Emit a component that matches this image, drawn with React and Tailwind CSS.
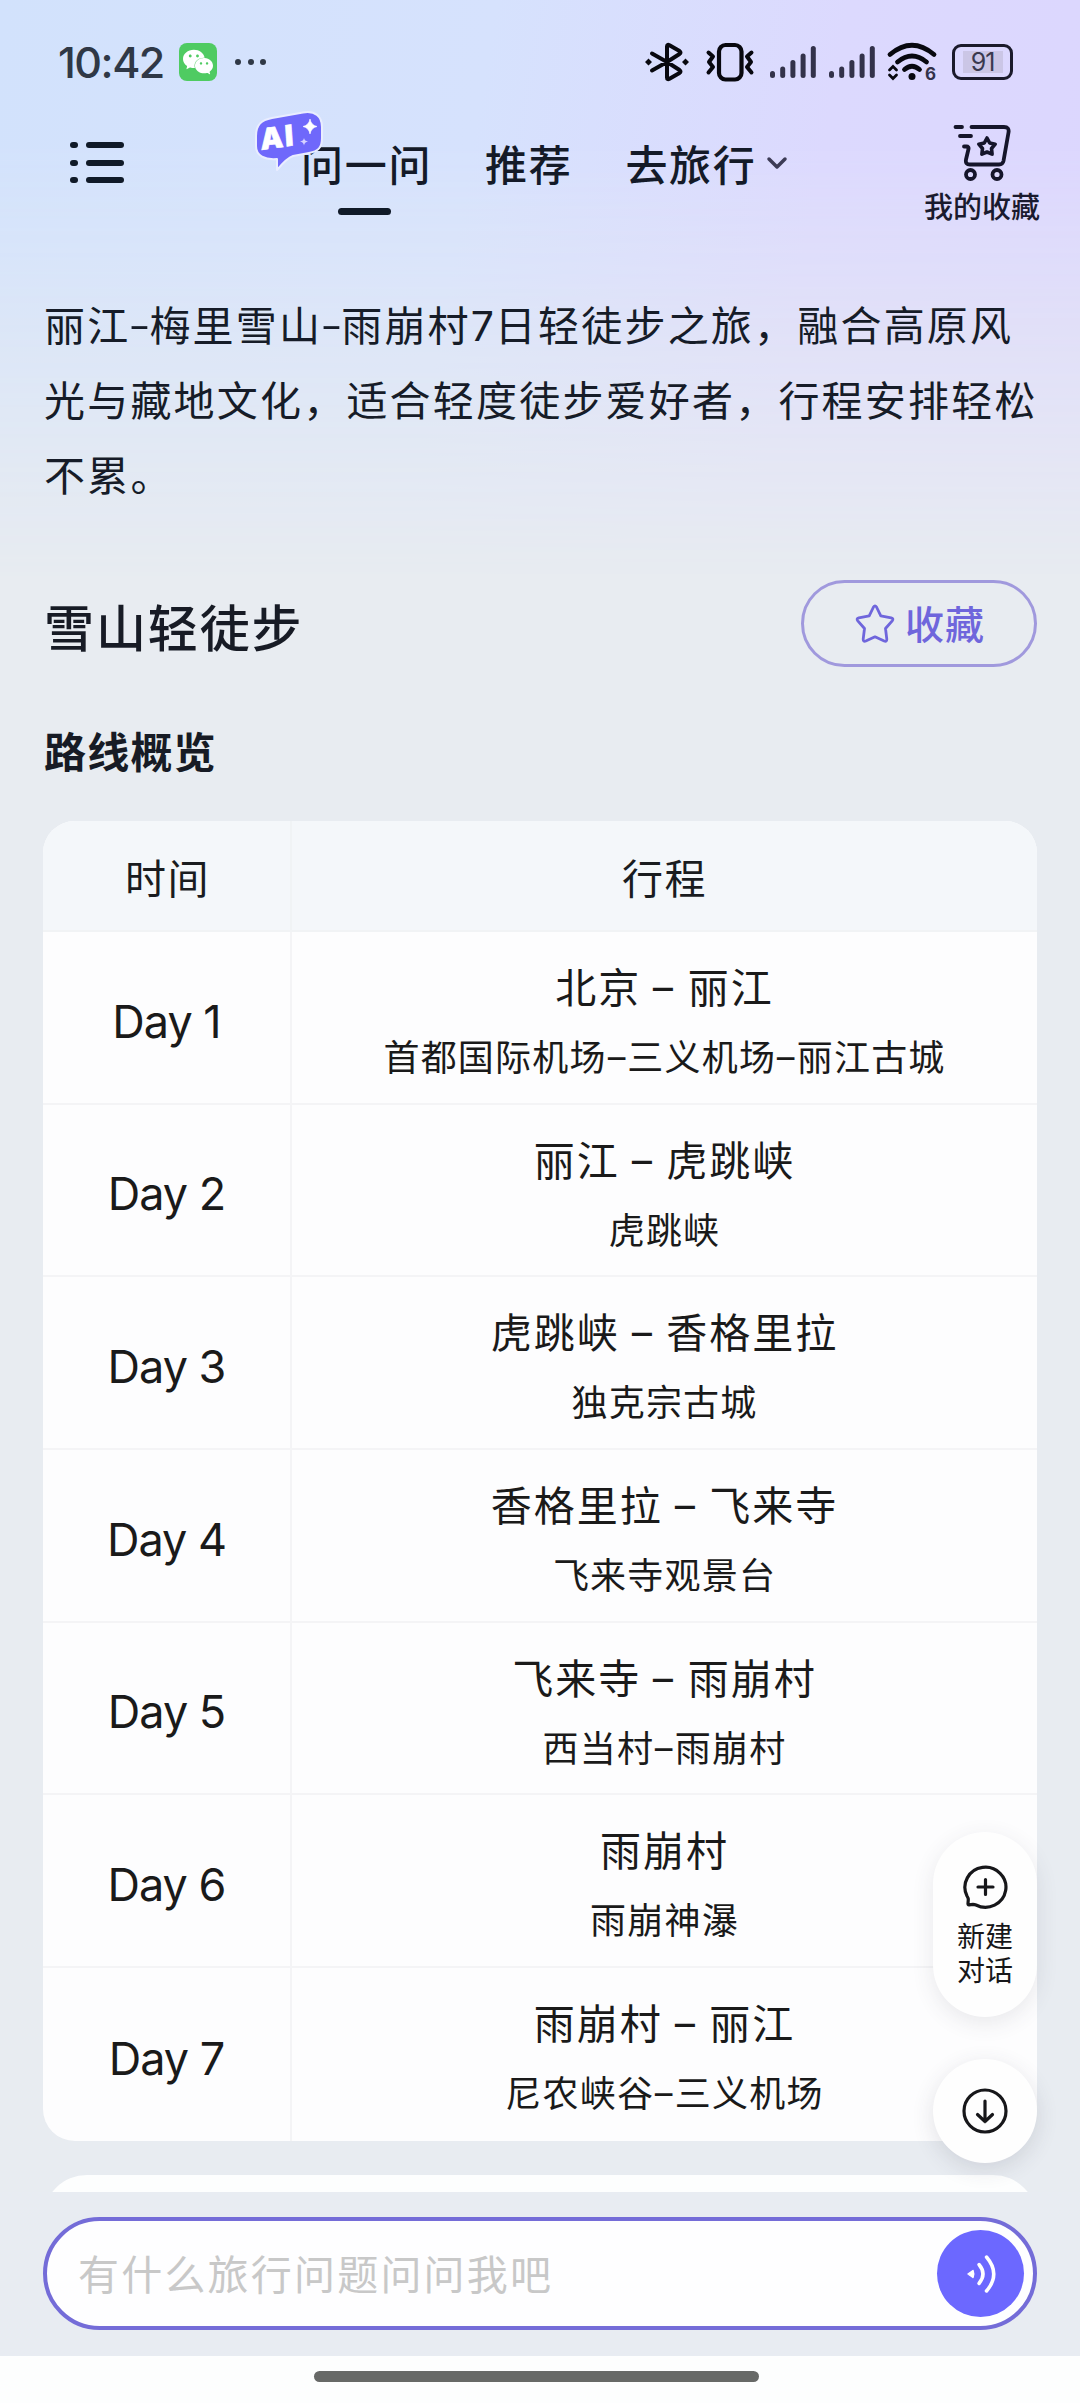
import { SiWechat } from 'react-icons/si';

const DAYS = [
  { day: 'Day 1', title: '北京 – 丽江', detail: '首都国际机场–三义机场–丽江古城' },
  { day: 'Day 2', title: '丽江 – 虎跳峡', detail: '虎跳峡' },
  { day: 'Day 3', title: '虎跳峡 – 香格里拉', detail: '独克宗古城' },
  { day: 'Day 4', title: '香格里拉 – 飞来寺', detail: '飞来寺观景台' },
  { day: 'Day 5', title: '飞来寺 – 雨崩村', detail: '西当村–雨崩村' },
  { day: 'Day 6', title: '雨崩村', detail: '雨崩神瀑' },
  { day: 'Day 7', title: '雨崩村 – 丽江', detail: '尼农峡谷–三义机场' },
];

const BluetoothIcon = () => (
  <svg className="w-[44px] h-[40px]" viewBox="0 0 44 40" fill="none" stroke="#08080f" strokeWidth="4" strokeLinecap="round" strokeLinejoin="round">
    <path d="M7 11.500 L22 20 L34.500 28 Q36.500 29.500 34.500 31 L24.500 36.800 Q22 38 22 35.500 V4.500 Q22 2 24.500 3.200 L34.500 9 Q36.500 10.500 34.500 12 L22 20 L7 28.500" />
    <path d="M3.500 16.500 l3.500 3.500 -3.500 3.500 -3.500 -3.500z M40.500 16.500 l3.500 3.500 -3.500 3.500 -3.500 -3.500z" fill="#08080f" stroke="none" />
  </svg>
);

const VibrateIcon = () => (
  <svg className="w-[50px] h-[40px]" viewBox="0 0 50 40" fill="none" stroke="#08080f" strokeWidth="4.200" strokeLinecap="round" strokeLinejoin="round">
    <rect x="14" y="3" width="22.500" height="34.500" rx="6.500" />
    <path d="M3.500 10.500 L8 14.500 L4 20 L8 25 L3.500 30.500 M46.500 10.500 L42 14.500 L46 20 L42 25 L46.500 30.500" strokeWidth="4" />
  </svg>
);

const SignalIcon = () => (
  <svg className="w-[46px] h-[34px]" viewBox="0 0 46 34" fill="#33324a">
    <rect x="0" y="26" width="5" height="7" rx="2.500" />
    <rect x="10.200" y="21.500" width="5" height="11.500" rx="2.500" />
    <rect x="20.400" y="15" width="5" height="18" rx="2.500" />
    <rect x="30.600" y="8.500" width="5" height="24.500" rx="2.500" />
    <rect x="40.800" y="1" width="5" height="32" rx="2.500" />
  </svg>
);

const WifiIcon = () => (
  <svg className="w-[50px] h-[40px] overflow-visible" viewBox="0 0 50 40" fill="none" stroke="#08080f" strokeWidth="4.800" strokeLinecap="round">
    <path d="M3 12.500 Q25 -6 47 12.500" />
    <path d="M10.500 20 Q25 8 39.500 20" />
    <path d="M17.500 27.500 Q25 21 32.500 27.500" />
    <circle cx="25" cy="34.500" r="3.500" fill="#08080f" stroke="none" />
    <path d="M2.500 28 L6 24.500 L9.500 28 M2.500 33 L6 36.500 L9.500 33" strokeWidth="2.800" />
    <text x="38" y="37.500" fontSize="17" fontWeight="700" fontFamily="Inter, sans-serif" fill="#33324a" stroke="none">6</text>
  </svg>
);

const AiBadge = () => (
  <svg className="absolute -left-[48px] -top-[22px] w-[72px] h-[66px]" viewBox="0 0 72 66">
    <path
      d="M19 9 L50 3.500 C62 1.500 69 7 69 18 V29 C69 39 65 42.500 56 44 L40 47 C34 49 29 55 24 61 L24 50 C12 51 3 47 3 37 V27 C3 16 8 11 19 9 Z"
      fill="#6f68fb"
      stroke="#e9edff"
      strokeWidth="2"
      strokeLinejoin="round"
    />
    <text x="8" y="41" fontSize="29" fontWeight="900" fontFamily="Inter, sans-serif" fill="#fff" stroke="#fff" strokeWidth=".6" transform="rotate(-8 8 41) skewX(-4) translate(3 0)">AI</text>
    <path d="M57 10 Q58.200 16.300 64 17.500 Q58.200 18.700 57 25 Q55.800 18.700 50 17.500 Q55.800 16.300 57 10Z" fill="#fff" stroke="#fff" strokeWidth=".6" />
    <path d="M51 29 Q51.500 32 55 32.500 Q51.500 33 51 36.500 Q50.500 33 47 32.500 Q50.500 32 51 29Z" fill="#d6d2ff" />
  </svg>
);

const CartIcon = () => (
  <svg className="w-[58px] h-[58px]" viewBox="0 0 58 58" fill="none" stroke="#15152a" strokeWidth="3.800" strokeLinecap="round" strokeLinejoin="round">
    <path d="M2.500 3 H9 M18.500 3 H51 Q56.500 3 55.500 8.500 L50.500 37 Q49.800 40.500 46 40.500 H17 Q12 40.500 13 35.500 L15.500 25 Q16 22.500 13.500 22.500 H11 M7 12 H18" />
    <path d="M34 14 l2.700 5 5.500 1.200 -3.700 4.300 .6 5.700 -5.100 -2.200 -5.100 2.200 .6 -5.700 -3.700 -4.300 5.500 -1.200z" strokeWidth="3.600" />
    <circle cx="17.500" cy="50.500" r="4.500" />
    <circle cx="44" cy="50.500" r="4.500" />
  </svg>
);

const StatusBar = () => (
  <div className="h-[124px] pl-[58px] pr-[67px] flex items-center">
    <span className="w-[101px] text-[43px] leading-none tracking-[-1.500px] text-[#2f3846] font-[Inter] font-medium whitespace-nowrap">10:42</span>
    <span className="ml-5 w-[38px] h-[38px] rounded-[8px] bg-[#4fcb62] flex items-center justify-center text-white">
      <SiWechat size={30} />
    </span>
    <span className="ml-[18px] flex gap-[6.500px]">
      <i className="w-[6px] h-[6px] rounded-full bg-[#2f3846]" />
      <i className="w-[6px] h-[6px] rounded-full bg-[#2f3846]" />
      <i className="w-[6px] h-[6px] rounded-full bg-[#2f3846]" />
    </span>
    <div className="ml-auto flex items-center">
      <BluetoothIcon />
      <span className="w-4" />
      <VibrateIcon />
      <span className="w-[15px]" />
      <SignalIcon />
      <span className="w-[13px]" />
      <SignalIcon />
      <span className="w-[12px]" />
      <WifiIcon />
      <span className="ml-[15px] w-[61px] h-[36px] rounded-[9px] border-[3px] border-[#1b1a2b] flex items-center justify-center">
        <span className="w-[40px] h-[22px] bg-[#cbc6e6] flex items-center justify-center text-[25px] leading-none tracking-[-1px] font-[Inter] text-[#3a394f]">91</span>
      </span>
    </div>
  </div>
);

const NavBar = () => (
  <div className="h-[176px] flex items-start">
    <div className="ml-[70px] mt-[18px] w-[54px] flex flex-col gap-[11.500px]">
      {[0, 1, 2].map(i => (
        <div key={i} className="flex justify-between">
          <i className="w-[8px] h-[6px] rounded-full bg-[#101a28]" />
          <i className="w-[38px] h-[6px] rounded-full bg-[#101a28]" />
        </div>
      ))}
    </div>
    <div className="ml-[177px] mt-[7px] flex text-[42px] leading-[64px] tracking-[1.700px] font-medium text-[#141a28] whitespace-nowrap">
      <div className="relative w-[131px]">
        问一问
        <AiBadge />
        <div className="mx-auto mt-[13px] w-[53px] h-[7px] rounded-full bg-[#101a28] -translate-x-[2px]" />
      </div>
      <div className="ml-[53px]">推荐</div>
      <div className="ml-[53px] flex items-center h-[64px]">
        去旅行
        <svg className="ml-[9px] w-[22px] h-[14px]" viewBox="0 0 22 14" fill="none" stroke="#3c3b55" strokeWidth="3.500" strokeLinecap="round" strokeLinejoin="round">
          <path d="M3 3 L11 11 L19 3" />
        </svg>
      </div>
    </div>
    <div className="ml-auto mr-[39px] w-[118px] flex flex-col items-center">
      <CartIcon />
      <span className="mt-[2px] text-[29px] leading-[42px] font-medium text-[#1a1a2e]">我的收藏</span>
    </div>
  </div>
);

const Dash = () => <span className="inline-block w-[19px] h-[75px] align-top text-center tracking-normal scale-x-150 -translate-y-[2px]">-</span>;

// En dashes sit a little low and thin next to Han glyphs
const RouteText = ({ text }) => text.split('–').map((part, i) => (
  <span key={i}>
    {i > 0 && <span className="inline-block font-medium scale-x-110 -translate-y-[2px]">–</span>}
    {part}
  </span>
));

const RouteTable = () => (
  <div className="mx-[43px] rounded-[32px] overflow-hidden bg-[#fdfdfe]">
    <div className="h-[111px] flex items-stretch bg-[#f4f7fa] border-b-2 border-[#f1f3f5] text-[41px] tracking-[1.500px] text-[#1a1c1f]">
      <div className="w-[249px] flex items-center justify-center border-r-2 border-[#f0f3f5] pl-[2px] pt-[2px]">时间</div>
      <div className="flex-1 flex items-center justify-center pt-[2px]">行程</div>
    </div>
    {DAYS.map(d => (
      <div key={d.day} className="h-[172.700px] flex items-stretch text-[#1a1a1a] border-b-2 border-[#f4f4f6] last:border-b-0">
        <div className="w-[249px] flex items-center justify-center border-r-2 border-[#f4f4f6] text-[45px] tracking-[-1px] font-[Inter] pt-2">{d.day}</div>
        <div className="flex-1 flex flex-col items-center pt-[20px] whitespace-pre">
          <div className="text-[41px] leading-[66px] tracking-[2px]"><RouteText text={d.title} /></div>
          <div className="mt-[5px] text-[36px] leading-[64px] tracking-[1.200px]"><RouteText text={d.detail} /></div>
        </div>
      </div>
    ))}
  </div>
);

const FloatingActions = () => (
  <div className="absolute right-[43px] top-[1832px] flex flex-col gap-[42px] text-[#17171a]">
    <div className="w-[104px] h-[185px] rounded-[52px] bg-[#fefefe] shadow-[0_6px_22px_rgba(60,60,80,0.11)] flex flex-col items-center pt-[32px]">
      <svg className="w-[46px] h-[46px]" viewBox="0 0 46 46" fill="none" stroke="currentColor" strokeWidth="3.200" strokeLinecap="round" strokeLinejoin="round">
        <path d="M5 32 A20.500 20 0 1 1 14 41 Q12.500 40.300 11 40.300 L7 40.800 Q5.800 40.800 6 39.500 L6.300 35.500 Q6.300 34 5 32Z" />
        <path d="M23.500 15.500 V30.500 M16 23 H31" />
      </svg>
      <div className="mt-[8px] text-[28px] leading-[34px] text-center">新建<br />对话</div>
    </div>
    <div className="w-[104px] h-[104px] rounded-full bg-[#fefefe] shadow-[0_6px_22px_rgba(60,60,80,0.14)] flex items-center justify-center">
      <svg className="w-[46px] h-[46px]" viewBox="0 0 46 46" fill="none" stroke="currentColor" strokeWidth="3.200" strokeLinecap="round" strokeLinejoin="round">
        <circle cx="23" cy="23" r="21" />
        <path d="M23 13 V33.500 M15.500 26.500 L23 33.500 L30.500 26.500" />
      </svg>
    </div>
  </div>
);

const ChatInput = () => (
  <div className="h-[164px] bg-[#e8ecf2] pt-[25px] px-[43px]">
    <div className="h-[113px] rounded-full border-[4.500px] border-[#746cd8] bg-[#fefeff] pl-[31px] pr-[9px] flex items-center justify-between">
      <span className="text-[41px] tracking-[2.200px] text-[#c8c8c8] -translate-y-[1px]">有什么旅行问题问问我吧</span>
      <div className="w-[87px] h-[87px] rounded-full bg-[#6c68ff] flex items-center justify-center">
        <svg className="w-[32px] h-[42px]" viewBox="0 0 32 42" fill="none" stroke="#fff" strokeWidth="3.500" strokeLinecap="round">
          <path d="M3 21 L8 17.500 Q9.500 21 8 24.500Z" fill="#fff" stroke="#fff" strokeWidth="1.500" strokeLinejoin="round" />
          <path d="M14 11.500 Q22 21 14 30.500" />
          <path d="M21.500 4 Q36 21 21.500 38" />
        </svg>
      </div>
    </div>
  </div>
);

const App = () => (
  <div className="relative w-[1080px] h-[2403px] overflow-hidden flex flex-col bg-[#e8ecf1] font-['Noto_Sans_CJK_SC',sans-serif]">
    <div className="absolute inset-x-0 top-0 h-[580px] bg-[linear-gradient(100deg,#d2e2fc_0%,#d6e2fd_42%,#dcd9fe_72%,#dcd6fe_100%)] [mask-image:linear-gradient(to_bottom,black_25%,transparent)]" />
    <div className="relative h-[2192px] overflow-hidden shrink-0">
      <StatusBar />
      <NavBar />

      {/* Trip summary */}
      <div className="ml-[44px] -mt-[14px] text-[41px] leading-[75px] tracking-[2.200px] text-[#161c28] whitespace-nowrap">
        <div className="h-[75px]">丽江<Dash />梅里雪山<Dash />雨崩村<span className="inline-block w-[24px] font-[Inter] tracking-normal">7</span>日轻徒步之旅，融合高原风</div>
        <div className="h-[75px]">光与藏地文化，适合轻度徒步爱好者，行程安排轻松</div>
        <div className="h-[75px]">不累。</div>
      </div>

      {/* Title and favourite button */}
      <div className="mt-[69px] mx-[43px] pl-[1px] flex items-center justify-between h-[87px]">
        <h1 className="text-[50px] leading-[75px] tracking-[1.900px] font-medium text-[#171b25] pt-[3px]">雪山轻徒步</h1>
        <button className="w-[236px] h-[87px] rounded-full border-[3px] border-[#a099dd] flex items-center justify-center text-[39px] tracking-[1px] text-[#6f66dc]">
          <svg className="w-[40px] h-[40px] ml-[2px] mr-[10px]" viewBox="0 0 40 40" fill="none" stroke="currentColor" strokeWidth="2.800" strokeLinejoin="round">
            <path d="M18.500 3 Q20 .8 21.500 3 L25.800 11.800 L36.200 13.800 Q39 14.500 37.200 16.800 L30.500 24.500 L31.800 35.200 Q31.800 38 29.200 37 L20 32.800 L10.800 37 Q8.200 38 8.200 35.200 L9.500 24.500 L2.800 16.800 Q1 14.500 3.800 13.800 L14.200 11.800 Z" />
          </svg>
          <span className="-translate-y-[1px] font-medium">收藏</span>
        </button>
      </div>

      <h2 className="mt-[51px] ml-[44px] text-[42px] leading-[64px] tracking-[1.200px] font-bold text-[#171b25]">路线概览</h2>
      <div className="h-[39px]" />
      <RouteTable />
      <div className="mt-[34px] mx-[43px] h-[120px] rounded-[44px] bg-[#fdfefe]" />
    </div>
    <ChatInput />
    <div className="flex-1 bg-[#fdfefe] pt-[15px]">
      <div className="mx-auto w-[445px] h-[11px] rounded-full bg-[#676967] -translate-x-[4px]" />
    </div>
    <FloatingActions />
  </div>
);

export default App;
